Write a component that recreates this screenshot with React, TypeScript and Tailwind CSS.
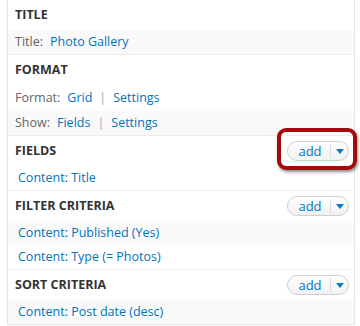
import React from "react"

function AddButton({ highlight = false }: { highlight?: boolean }) {
  return (
    <div className="relative">
      {highlight && (
        <div className="pointer-events-none absolute -left-[10px] -top-[13px] h-[42px] w-[80px] rounded-[9px] border-[4px] border-[#a50a0a] shadow-[1px_2px_3px_rgba(0,0,0,0.45)]" />
      )}
      <div className="flex h-[20px] w-[62px] items-center rounded-full border border-[#cfcfcf] bg-gradient-to-b from-white to-[#f1f1f1]">
        <span className="flex w-[42px] justify-center pl-[2px] text-[13px] leading-none text-[#0074bd]">add</span>
        <span className="h-[14px] w-px bg-[#dcdcdc]" />
        <span className="flex flex-1 justify-center">
          <svg width="8" height="5" viewBox="0 0 8 5">
            <path d="M0 0 H8 L4 5 Z" fill="#0a7bc2" />
          </svg>
        </span>
      </div>
    </div>
  )
}

function Header({ title, add, highlight }: { title: string; add?: boolean; highlight?: boolean }) {
  return (
    <div className="flex h-[30px] items-center justify-between pl-[7px] pr-[5px]">
      <span className="text-[12.5px] font-bold uppercase text-[#333]">{title}</span>
      {add && <AddButton highlight={highlight} />}
    </div>
  )
}

function Row({ grey, children, indent, tall }: { grey?: boolean; children: React.ReactNode; indent?: boolean; tall?: boolean }) {
  return (
    <div className={`flex ${tall ? "h-[26px]" : "h-[24px]"} items-center text-[12.5px] ${indent ? "pl-[10px]" : "pl-[7px]"} ${grey ? "bg-[#f9f9f9]" : "bg-white"}`}>
      {children}
    </div>
  )
}

const Label = ({ children }: { children: React.ReactNode }) => (
  <span className="mr-[7px] text-[#666]">{children}</span>
)
const Link = ({ children }: { children: React.ReactNode }) => (
  <span className="text-[#0074bd]">{children}</span>
)
const Sep = () => <span className="mx-[7px] text-[#9ab]">|</span>

export default function App() {
  return (
    <div className="h-[326px] w-[360px] overflow-hidden bg-white" style={{ fontFamily: '"Open Sans", "DejaVu Sans", sans-serif' }}>
      <div className="ml-[7px] w-[348px] border-x border-b border-[#e6e6e6]">
        <section className="border-b border-[#eee]">
          <Header title="Title" />
          <Row grey>
            <Label>Title:</Label>
            <Link>Photo Gallery</Link>
          </Row>
        </section>
        <section className="border-b border-[#eee]">
          <Header title="Format" />
          <Row tall>
            <Label>Format:</Label>
            <Link>Grid</Link>
            <Sep />
            <Link>Settings</Link>
          </Row>
          <Row grey>
            <Label>Show:</Label>
            <Link>Fields</Link>
            <Sep />
            <Link>Settings</Link>
          </Row>
        </section>
        <section className="border-b border-[#eee]">
          <Header title="Fields" add highlight />
          <Row indent>
            <Link>Content: Title</Link>
          </Row>
        </section>
        <section className="border-b border-[#eee]">
          <Header title="Filter criteria" add />
          <Row grey indent>
            <Link>Content: Published (Yes)</Link>
          </Row>
          <Row indent>
            <Link>Content: Type (= Photos)</Link>
          </Row>
        </section>
        <section>
          <Header title="Sort criteria" add />
          <Row grey indent>
            <Link>Content: Post date (desc)</Link>
          </Row>
        </section>
      </div>
    </div>
  )
}
